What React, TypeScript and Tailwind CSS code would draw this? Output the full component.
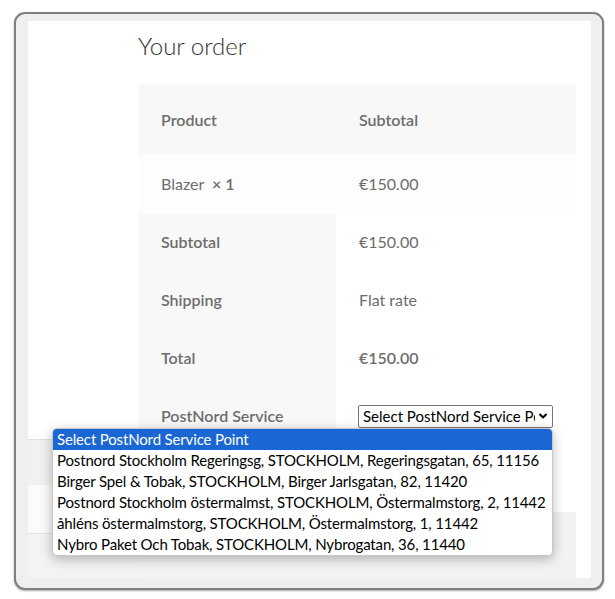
import { ChevronDown } from 'lucide-react';

const points = [
  'Postnord Stockholm Regeringsg, STOCKHOLM, Regeringsgatan, 65, 11156',
  'Birger Spel & Tobak, STOCKHOLM, Birger Jarlsgatan, 82, 11420',
  'Postnord Stockholm östermalmst, STOCKHOLM, Östermalmstorg, 2, 11442',
  'åhléns östermalmstorg, STOCKHOLM, Östermalmstorg, 1, 11442',
  'Nybro Paket Och Tobak, STOCKHOLM, Nybrogatan, 36, 11440',
];

const FootRow = ({ label, children }: { label: string; children: React.ReactNode }) => (
  <>
    <div className="h-[58px] bg-[#f8f8f8] pl-[23px] flex items-center font-semibold">{label}</div>
    <div className="h-[58px] pl-[23px] flex items-center">{children}</div>
  </>
);

const App = () => {
  return (
    <div className="relative w-[615px] h-[599px] bg-white pt-[12px] pl-[14px] font-[Lato,sans-serif] text-[16px] text-[#6d6d6d]">
      <div className="w-[590px] h-[578px] rounded-[11px] border-2 border-[#808080] bg-[#efefef] pl-[12px] pt-[7px] shadow-[0_1px_2px_rgba(0,0,0,0.35)]">
        <div className="w-[563px] h-[557px] bg-white flex overflow-hidden">
          {/* left strip */}
          <div className="w-[110px] flex flex-col">
            <div className="h-[418px] bg-white" />
            <div className="h-px bg-[#e2e2e2]" />
            <div className="h-[45px] bg-[#f1f1f1]" />
            <div className="h-[48px] flex">
              <div className="w-[48px] bg-[#fbfbfb]" />
              <div className="flex-1 bg-[#f2f2f2]" />
            </div>
            <div className="h-px bg-[#e4e4e4]" />
            <div className="flex-1 bg-[#f3f3f3]" />
          </div>

          {/* main column */}
          <div className="flex-1 flex flex-col">
            <div className="h-[63px] pt-[10px]">
              <h2 className="text-[24px] leading-[30px] font-light text-[#333333]">Your order</h2>
            </div>

            <div className="w-[438px] grid grid-cols-[198px_240px]">
              <div className="h-[71px] bg-[#f8f8f8] pl-[23px] flex items-center font-semibold">Product</div>
              <div className="h-[71px] bg-[#f8f8f8] pl-[23px] flex items-center font-semibold">Subtotal</div>

              <div className="h-[58px] bg-[#fdfdfd] pl-[23px] flex items-center">
                Blazer&nbsp;<strong className="font-semibold ml-[4px]">× 1</strong>
              </div>
              <div className="h-[58px] bg-[#fdfdfd] pl-[23px] flex items-center">€150.00</div>

              <FootRow label="Subtotal">€150.00</FootRow>
              <FootRow label="Shipping">Flat rate</FootRow>
              <FootRow label="Total">
                <strong className="font-semibold">€150.00</strong>
              </FootRow>
              <div className="h-[58px] bg-[#f8f8f8] pl-[23px] flex items-center font-semibold">PostNord Service</div>
              <div className="h-[58px] pl-[22px] flex items-center">
                <div className="w-[195px] h-[23px] border border-[#767676] rounded-[2px] bg-white flex items-center pl-[4px] pr-[3px] text-black text-[15px]">
                  <span className="flex-1 overflow-hidden whitespace-nowrap">Select PostNord Service Point</span>
                  <ChevronDown className="w-[12px] h-[12px] ml-[2px] shrink-0" strokeWidth={4} />
                </div>
              </div>
            </div>

            <div className="h-[67px]" />
            <div className="w-[438px] flex-1 bg-[#f2f2f2]" />
          </div>
        </div>
      </div>

      {/* open select list */}
      <div className="absolute left-[52px] top-[428px] w-[501px] rounded-[5px] border border-[#c8c8c8] bg-white overflow-hidden shadow-[0_3px_12px_rgba(0,0,0,0.28)] text-black text-[15px] tracking-[-0.15px]">
        <div className="h-[21px] leading-[21px] pl-[4px] bg-[#1a67d3] text-white whitespace-nowrap">Select PostNord Service Point</div>
        {points.map((p) => (
          <div key={p} className="h-[21px] leading-[21px] pl-[4px] whitespace-nowrap">
            {p}
          </div>
        ))}
      </div>
    </div>
  );
};

export default App;
